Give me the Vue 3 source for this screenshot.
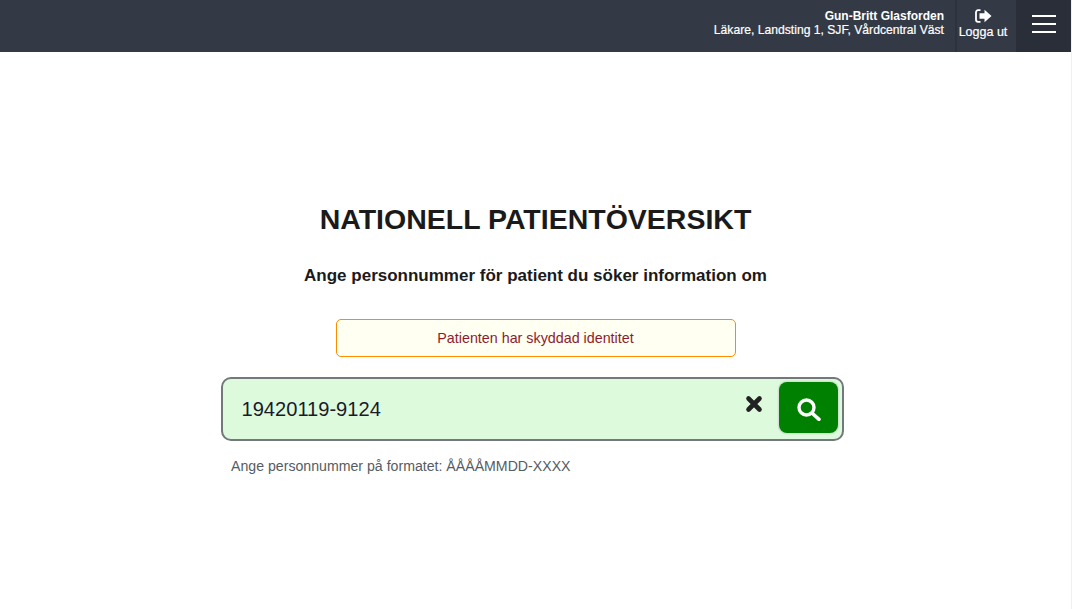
<script setup>
const title = 'NATIONELL PATIENTÖVERSIKT'
</script>

<template>
  <div class="page">
    <header class="topbar">
      <div class="user">
        <div class="name">Gun-Britt Glasforden</div>
        <div class="role">Läkare, Landsting 1, SJF, Vårdcentral Väst</div>
      </div>
      <button class="logout">
        <svg class="logout-icon" width="17" height="14" viewBox="0 0 17 14">
          <path d="M5.500 1.200H3A2 2 0 0 0 1 3.200v7.600a2 2 0 0 0 2 2h2.500" fill="none" stroke="#fff" stroke-width="1.800"/>
          <path d="M4.500 4.300H9.500V.8L16.500 7l-7 6.200V9.700H4.500z" fill="#fff"/>
        </svg>
        <span>Logga ut</span>
      </button>
      <button class="menu" aria-label="Meny">
        <i></i><i></i><i></i>
      </button>
    </header>
    <main class="content">
      <h1>{{ title }}</h1>
      <h2>Ange personnummer för patient du söker information om</h2>
      <div class="alert">Patienten har skyddad identitet</div>
      <div class="search">
        <span class="value">19420119-9124</span>
        <svg class="clear" width="18" height="18" viewBox="0 0 18 18">
          <path d="M3.500 3.500 14.500 14.500M14.500 3.500 3.500 14.500" stroke="#222" stroke-width="4.600" stroke-linecap="round"/>
        </svg>
        <button class="go" aria-label="Sök">
          <svg class="go-icon" width="24" height="23" viewBox="0 0 24 23">
            <circle cx="9.500" cy="9.500" r="7.500" fill="none" stroke="#fff" stroke-width="3.400"/>
            <path d="M15.500 15.500l6.500 5.800" stroke="#fff" stroke-width="3.600" stroke-linecap="round"/>
          </svg>
        </button>
      </div>
      <p class="hint">Ange personnummer på formatet: ÅÅÅÅMMDD-XXXX</p>
    </main>
  </div>
</template>

<style>
html, body { margin: 0; background: #fff; }
</style>

<style scoped>
.page {
  width: 1071px;
  height: 609px;
  font-family: "Liberation Sans", Arial, sans-serif;
  color: #1a1a1a;
  display: flex;
  flex-direction: column;
  border-right: 1px solid #f0f0f0;
}
.topbar {
  height: 52px;
  background: #343a45;
  display: flex;
  justify-content: flex-end;
  align-items: stretch;
  color: #fff;
}
.user {
  font-size: 12px;
  text-align: right;
  padding: 9px 11px 0 0;
}
.name { font-weight: 700; line-height: 14px; }
.role { font-size: 12.15px; line-height: 15px; -webkit-text-stroke: 0.2px #fff; }
.logout {
  width: 61px;
  border: 0;
  border-left: 2px solid #2d323c;
  background: transparent;
  color: #fff;
  font: 400 12.5px "Liberation Sans", Arial, sans-serif;
  -webkit-text-stroke: 0.2px #fff;
  padding: 9px 7px 0 0;
  display: flex;
  flex-direction: column;
  align-items: center;
  gap: 2px;
}
.logout-icon { display: block; }
.menu {
  width: 55px;
  border: 0;
  background: #2a2e38;
  padding: 0 0 4px;
  display: flex;
  flex-direction: column;
  align-items: center;
  justify-content: center;
  gap: 6px;
}
.menu i {
  display: block;
  width: 24px;
  height: 2px;
  background: #fff;
}
.content {
  flex: 1;
  display: flex;
  flex-direction: column;
  align-items: center;
}
h1 {
  margin: 150px 0 0;
  font-size: 28.5px;
  line-height: 34px;
  font-weight: 700;
}
h2 {
  margin: 29px 0 0;
  font-size: 17px;
  line-height: 22px;
  font-weight: 700;
}
.alert {
  margin-top: 32px;
  width: 400px;
  height: 38px;
  box-sizing: border-box;
  border: 1px solid #ff8c00;
  border-radius: 5px;
  background: #fffff2;
  color: #8c1c2c;
  font-size: 14.3px;
  line-height: 36px;
  text-align: center;
}
.search {
  margin: 20px 7px 0 0;
  width: 623px;
  height: 64px;
  box-sizing: border-box;
  border: 2px solid #73797a;
  border-radius: 10px;
  background: #ddfadd;
  display: flex;
  align-items: center;
  padding: 0 3.500px 0 19px;
}
.value {
  flex: 1;
  font-size: 20.100px;
  color: #1a1a2a;
}
.clear { margin: -10px 16px 0 0; }
.go {
  width: 59px;
  height: 51px;
  align-self: flex-start;
  margin-top: 3px;
  border: 0;
  border-radius: 8px;
  background: #008000;
  box-shadow: 0 0 0 1.500px #d3e3d3;
  display: flex;
  align-items: center;
  justify-content: center;
  padding: 3px 0 0;
}
.go-icon { display: block; }
.hint {
  width: 623px;
  margin: 16px 7px 0 0;
  padding-left: 10.500px;
  box-sizing: border-box;
  font-size: 14.15px;
  line-height: 18px;
  color: #555c64;
}
</style>
